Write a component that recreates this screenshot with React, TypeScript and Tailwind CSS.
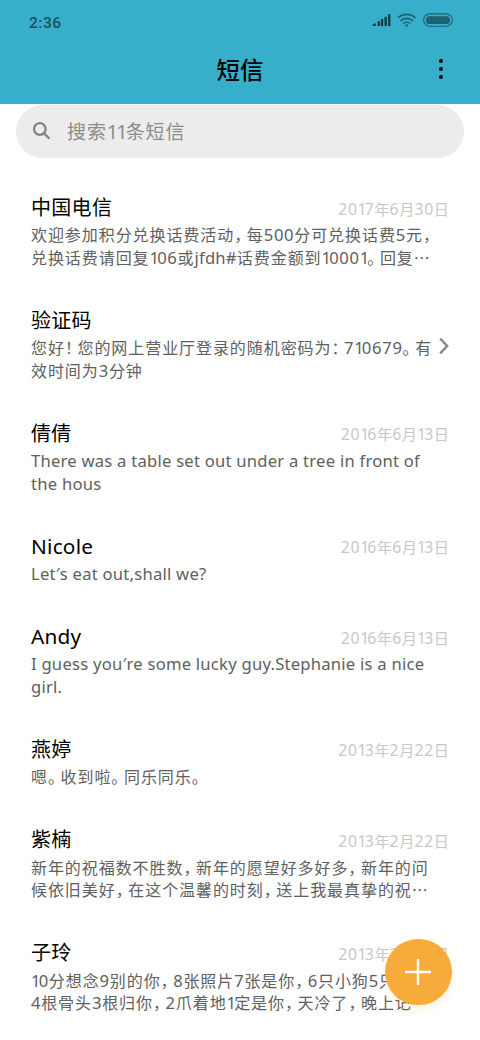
import { clsx } from "clsx"

type Message = {
  name: string
  date?: string
  lines: string[]
}

const messages: Message[] = [
  {
    name: "中国电信",
    date: "2017年6月30日",
    lines: ["欢迎参加积分兑换话费活动，每500分可兑换话费5元，", "兑换话费请回复106或jfdh#话费金额到10001。回复…"],
  },
  {
    name: "验证码",
    lines: ["您好！您的网上营业厅登录的随机密码为：710679。有", "效时间为3分钟"],
  },
  {
    name: "倩倩",
    date: "2016年6月13日",
    lines: ["There was a table set out under a tree in front of", "the hous"],
  },
  {
    name: "Nicole",
    date: "2016年6月13日",
    lines: ["Let′s eat out,shall we?"],
  },
  {
    name: "Andy",
    date: "2016年6月13日",
    lines: ["I guess you′re some lucky guy.Stephanie is a nice", "girl."],
  },
  {
    name: "燕婷",
    date: "2013年2月22日",
    lines: ["嗯。收到啦。同乐同乐。"],
  },
  {
    name: "紫楠",
    date: "2013年2月22日",
    lines: ["新年的祝福数不胜数，新年的愿望好多好多，新年的问", "候依旧美好，在这个温馨的时刻，送上我最真挚的祝…"],
  },
  {
    name: "子玲",
    date: "2013年2月22日",
    lines: ["10分想念9别的你，8张照片7张是你，6只小狗5只", "4根骨头3根归你，2爪着地1定是你，天冷了，晚上记"],
  },
]

// Splits a line into digits, latin words and full-width punctuation,
// so each kind gets its own spacing.
function MixedText({ text }: { text: string }) {
  const parts = text.match(/1|[02-9]+|[\x20-\x2f\x3a-\x7e′]+|[，。！：]|[^\x20-\x7e′，。！：]+/g) ?? []

  return (
    <>
      {parts.map((part, i) => (
        <span
          key={i}
          className={clsx(
            /^[，。！：]$/.test(part) && "tracking-[4.6px] [font-feature-settings:'halt']",
            part === "1" && "font-['Noto_Sans'] text-[1.04em] tracking-[-1.9px]",
            /^[02-9]/.test(part) && "font-['Noto_Sans'] text-[1.04em] tracking-[0.04em]",
            /^[\x20-\x2f\x3a-\x7e]/.test(part) && "font-['Noto_Sans'] text-[1.04em] tracking-[0.23px]"
          )}
        >
          {part}
        </span>
      ))}
    </>
  )
}

function StatusIcons() {
  return (
    <svg width="84" height="16" viewBox="0 0 84 16" fill="none">
      <g fill="#123a44">
        <path d="M2.5 13v-1.2l3.2-1.7V13z" />
        <rect x="7.6" y="8.3" width="2.3" height="4.7" />
        <rect x="10.9" y="6" width="2.3" height="7" />
        <rect x="14.5" y="3.8" width="2.3" height="9.2" />
        <rect x="18.1" y="1" width="2.3" height="12" />
      </g>
      <g stroke="#1f6170" strokeWidth="1.7">
        <path d="M28 4.9a12.6 12.6 0 0 1 17.4 0" />
        <path d="M30.6 7.9a8.8 8.8 0 0 1 12.2 0" />
        <path d="M33.3 10.6a4.9 4.9 0 0 1 6.8 0" />
      </g>
      <circle cx="36.7" cy="12.4" r="1.2" fill="#1f6170" />
      <rect x="53.6" y="0.9" width="28.8" height="12.4" rx="6.2" stroke="#1f6170" strokeWidth="1.1" />
      <rect x="56" y="3.2" width="24" height="7.8" rx="3.6" fill="#1f6170" />
    </svg>
  )
}

function MessageRow({ name, date, lines }: Message) {
  return (
    <li className={clsx("flex items-start", lines.length > 1 ? "h-[112.9px]" : "h-[90.3px]")}>
      <div className="min-w-0 flex-1">
        <div className="flex h-7 items-center justify-between">
          <h2 className="text-[20px] leading-7 tracking-[0.3px] text-black">
            <MixedText text={name} />
          </h2>
          {date && (
            <span className="pt-[2px] text-[15.2px] leading-6 whitespace-nowrap text-[#c8c8c8]">
              <MixedText text={date} />
            </span>
          )}
        </div>
        <div className="mt-[2.4px] text-[16px] leading-[22.6px] tracking-[0.93px] whitespace-nowrap text-[#606060]">
          {lines.map((line) => (
            <p key={line} className="h-[22.6px]">
              <MixedText text={line} />
            </p>
          ))}
        </div>
      </div>
      {!date && (
        <svg className="mt-[31.5px] shrink-0" width="10" height="18" viewBox="0 0 10 18" fill="none">
          <path d="M1.2 1.6L8.2 9l-7 7.4" stroke="#858585" strokeWidth="2.3" />
        </svg>
      )}
    </li>
  )
}

export default function App() {
  return (
    <div
      lang="zh-CN"
      className="relative flex h-[1040px] w-[480px] flex-col overflow-hidden bg-white font-['Noto_Sans_CJK_SC',sans-serif]"
    >
      <header className="h-[104.3px] shrink-0 bg-[#37afca]">
        <div className="flex h-[42px] items-center justify-between pr-[26px] pl-[29px]">
          <span className="pt-[3px] font-['Roboto'] text-[15.5px] leading-5 font-medium tracking-[0.5px] text-[#17505d]">
            2:36
          </span>
          <StatusIcons />
        </div>
        <div className="grid h-[54px] grid-cols-[1fr_auto_1fr] items-center">
          <h1 className="col-start-2 text-[23.5px] leading-8 font-medium text-black">短信</h1>
          <button className="mr-[32px] flex w-[14px] flex-col items-center gap-[4px] justify-self-end" aria-label="更多">
            <span className="size-[4px] rounded-full bg-black" />
            <span className="size-[4px] rounded-full bg-black" />
            <span className="size-[4px] rounded-full bg-black" />
          </button>
        </div>
      </header>

      <div className="mx-4 mt-[0.7px] flex h-[52.7px] shrink-0 items-center rounded-full bg-[#ececec] pl-4">
        <svg width="20" height="20" viewBox="0 0 20 20" fill="none" stroke="#858585" strokeWidth="2.3">
          <circle cx="7.8" cy="8" r="5.8" />
          <path d="M12 12.2l5.4 5.4" />
        </svg>
        <span className="ml-[15px] pt-px text-[19px] tracking-[0.9px] text-[#8b8b8b]">
          <MixedText text="搜索11条短信" />
        </span>
      </div>

      <ul className="flex flex-col px-[31px] pt-[35.4px]">
        {messages.map((message) => (
          <MessageRow key={message.name} {...message} />
        ))}
      </ul>

      <button
        className="absolute top-[938.6px] left-[385px] flex size-[66.5px] items-center justify-center rounded-full bg-[#f7ab3b] shadow-[0_4px_10px_rgba(247,171,59,0.18)]"
        aria-label="新建短信"
      >
        <svg width="26" height="26" viewBox="0 0 26 26" stroke="#fff" strokeWidth="2.4">
          <path d="M13 0v26M0 13h26" />
        </svg>
      </button>
    </div>
  )
}
